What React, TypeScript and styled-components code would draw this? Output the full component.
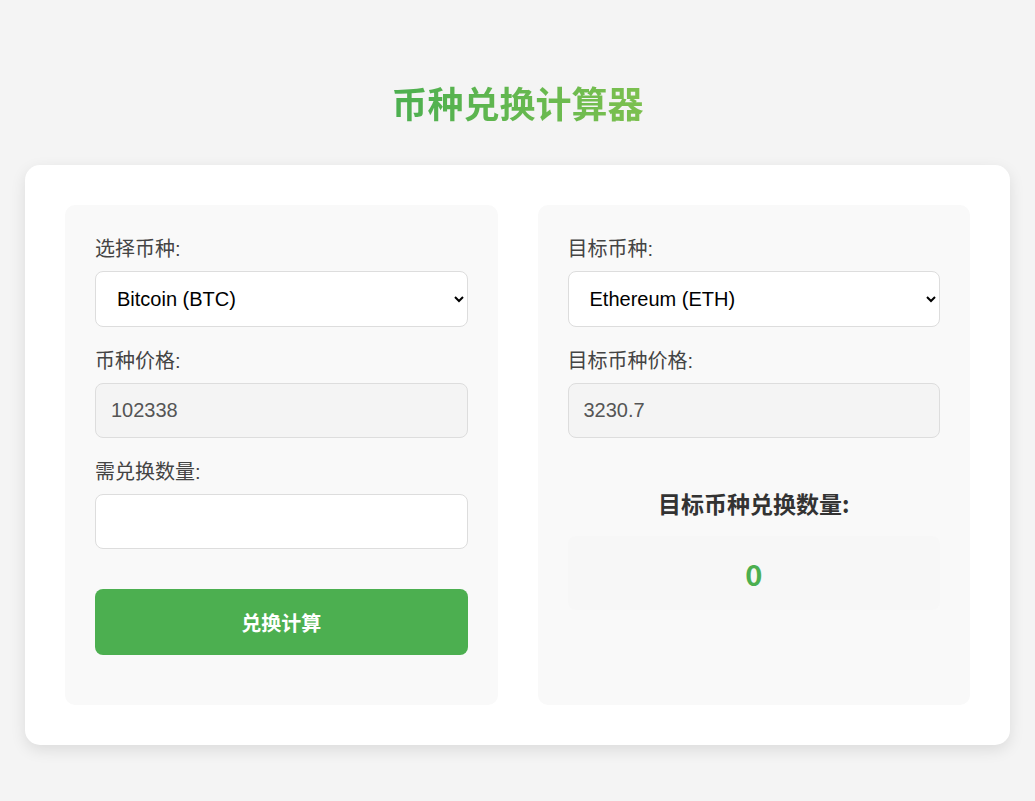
import { useState } from 'react';
import styled, { createGlobalStyle } from 'styled-components';

const GlobalStyle = createGlobalStyle`
    html, body {
        margin: 0;
        padding: 0;
        background: #f4f4f4;
        font-family: 'Liberation Sans', Arial, 'Noto Sans CJK SC', sans-serif;
    }
    * {
        box-sizing: border-box;
    }
`;

const Page = styled.div`
    padding: 80px 25px 56px;
`;

const Title = styled.h1`
    margin: 0 auto 41px;
    width: fit-content;
    font-size: 36px;
    line-height: 44px;
    font-weight: bold;
    text-align: center;
    font-family: 'Noto Sans CJK SC', sans-serif;
    background: linear-gradient(90deg, #4caf50 0%, #7cc04f 100%);
    -webkit-background-clip: text;
    background-clip: text;
    color: transparent;
`;

const Card = styled.div`
    background: #fff;
    border-radius: 15px;
    box-shadow: 0 5px 15px rgba(0, 0, 0, 0.1);
    padding: 40px;
    display: grid;
    grid-template-columns: 1fr 1fr;
    gap: 40px;
`;

const Panel = styled.div`
    background: #f9f9f9;
    border-radius: 10px;
    padding: 30px;
`;

const Group = styled.div`
    margin-bottom: 20px;
`;

const Label = styled.label`
    display: block;
    margin-bottom: 8px;
    font-size: 20px;
    line-height: 28px;
    color: #444;
    font-family: 'Liberation Sans', 'Noto Sans CJK SC', sans-serif;
`;

const Select = styled.select`
    display: block;
    width: 100%;
    height: 56px;
    padding: 0 15px 0 17px;
    font-size: 20px;
    font-family: 'Liberation Sans', Arial, sans-serif;
    color: #000;
    background: #fff;
    border: 1px solid #ddd;
    border-radius: 8px;
`;

const Input = styled.input<{ $readOnly?: boolean }>`
    display: block;
    width: 100%;
    height: 55px;
    padding: 0 15px;
    font-size: 20px;
    font-family: 'Liberation Sans', Arial, sans-serif;
    color: #555;
    background: ${p => (p.$readOnly ? '#f4f4f4' : '#fff')};
    border: 1px solid #ddd;
    border-radius: 8px;
    outline: none;
`;

const Button = styled.button`
    display: block;
    width: 100%;
    height: 66px;
    margin: 40px 0 20px;
    border: none;
    border-radius: 8px;
    background: #4caf50;
    color: #fff;
    font-size: 20px;
    font-weight: bold;
    font-family: 'Noto Sans CJK SC', sans-serif;
    cursor: pointer;
`;

const ResultHeading = styled.h3`
    margin: 51px 0 19px;
    font-size: 23px;
    line-height: 28px;
    font-weight: bold;
    color: #333;
    text-align: center;
    font-family: 'Noto Sans CJK SC', sans-serif;
`;

const ResultBox = styled.div`
    background: #f7f7f7;
    border-radius: 8px;
    height: 74px;
    display: flex;
    align-items: center;
    justify-content: center;
    font-size: 29px;
    font-weight: bold;
    color: #4caf50;
    font-family: 'Noto Sans CJK SC', sans-serif;
`;

const prices: Record<string, number> = {
    BTC: 102338,
    ETH: 3230.7,
    USDT: 1,
    BNB: 650.2
};

const coins = [
    { code: 'BTC', name: 'Bitcoin (BTC)' },
    { code: 'ETH', name: 'Ethereum (ETH)' },
    { code: 'USDT', name: 'Tether (USDT)' },
    { code: 'BNB', name: 'BNB (BNB)' }
];

export default function App() {
    const [from, setFrom] = useState('BTC');
    const [to, setTo] = useState('ETH');
    const [amount, setAmount] = useState('');
    const [result, setResult] = useState(0);

    const calculate = () => {
        const qty = parseFloat(amount) || 0;
        setResult(Number(((qty * prices[from]) / prices[to]).toFixed(6)));
    };

    return (
        <Page>
            <GlobalStyle />
            <Title>币种兑换计算器</Title>
            <Card>
                <Panel>
                    <Group>
                        <Label>选择币种:</Label>
                        <Select value={from} onChange={e => setFrom(e.target.value)}>
                            {coins.map(c => (
                                <option key={c.code} value={c.code}>
                                    {c.name}
                                </option>
                            ))}
                        </Select>
                    </Group>
                    <Group>
                        <Label>币种价格:</Label>
                        <Input $readOnly readOnly value={prices[from]} />
                    </Group>
                    <Group>
                        <Label>需兑换数量:</Label>
                        <Input value={amount} onChange={e => setAmount(e.target.value)} />
                    </Group>
                    <Button onClick={calculate}>兑换计算</Button>
                </Panel>
                <Panel>
                    <Group>
                        <Label>目标币种:</Label>
                        <Select value={to} onChange={e => setTo(e.target.value)}>
                            {coins.map(c => (
                                <option key={c.code} value={c.code}>
                                    {c.name}
                                </option>
                            ))}
                        </Select>
                    </Group>
                    <Group>
                        <Label>目标币种价格:</Label>
                        <Input $readOnly readOnly value={prices[to]} />
                    </Group>
                    <ResultHeading>目标币种兑换数量:</ResultHeading>
                    <ResultBox>{result}</ResultBox>
                </Panel>
            </Card>
        </Page>
    );
}
